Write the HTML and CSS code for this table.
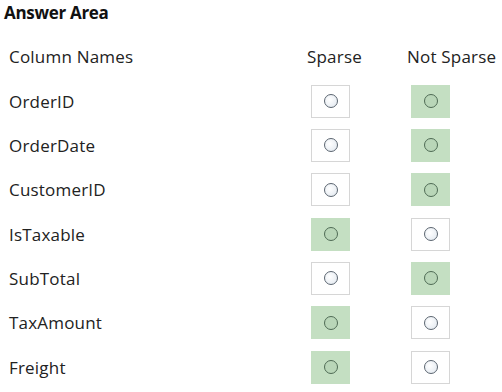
FILE: index.html
```html
<!DOCTYPE html>
<html>
<head>
<meta charset="utf-8">
<link rel="stylesheet" href="styles.css">
</head>
<body>
<div class="page">
  <h1 class="title">Answer Area</h1>
  <div class="grid">
    <div class="cell head name">Column Names</div>
    <div class="cell head">Sparse</div>
    <div class="cell head">Not Sparse</div>

    <div class="cell name">OrderID</div>
    <div class="cell"><span class="box"><span class="radio"></span></span></div>
    <div class="cell"><span class="box on"><span class="radio"></span></span></div>

    <div class="cell name">OrderDate</div>
    <div class="cell"><span class="box"><span class="radio"></span></span></div>
    <div class="cell"><span class="box on"><span class="radio"></span></span></div>

    <div class="cell name">CustomerID</div>
    <div class="cell"><span class="box"><span class="radio"></span></span></div>
    <div class="cell"><span class="box on"><span class="radio"></span></span></div>

    <div class="cell name">IsTaxable</div>
    <div class="cell"><span class="box on"><span class="radio"></span></span></div>
    <div class="cell"><span class="box"><span class="radio"></span></span></div>

    <div class="cell name">SubTotal</div>
    <div class="cell"><span class="box"><span class="radio"></span></span></div>
    <div class="cell"><span class="box on"><span class="radio"></span></span></div>

    <div class="cell name">TaxAmount</div>
    <div class="cell"><span class="box on"><span class="radio"></span></span></div>
    <div class="cell"><span class="box"><span class="radio"></span></span></div>

    <div class="cell name">Freight</div>
    <div class="cell"><span class="box on"><span class="radio"></span></span></div>
    <div class="cell"><span class="box"><span class="radio"></span></span></div>
  </div>
</div>
</body>
</html>
```
FILE: styles.css
```css
html, body {
  margin: 0;
  padding: 0;
  background: #fff;
}
.page {
  width: 502px;
  height: 392px;
  font-family: "Open Sans", "Noto Sans", sans-serif;
  color: #222;
}
.title {
  margin: 0;
  padding: 2px 0 0 4px;
  height: 34px;
  box-sizing: border-box;
  font-size: 17px;
  font-weight: 700;
  line-height: 22px;
  letter-spacing: -0.3px;
  color: #111;
}
.grid {
  display: grid;
  grid-template-columns: 298px 100px 95px;
  grid-template-rows: 45px repeat(7, 44.33px);
  padding-left: 9px;
}
.cell {
  display: flex;
  align-items: center;
  font-size: 17px;
  letter-spacing: 0.2px;
}
.head {
  color: #222;
}
.box {
  display: flex;
  align-items: center;
  justify-content: center;
  width: 39px;
  height: 33px;
  margin-left: 4px;
  box-sizing: border-box;
  border: 1px solid #d6d6d6;
  background: #fff;
}
.box.on {
  background: #c4dfc2;
  border-color: #c4dfc2;
}
.radio {
  width: 14px;
  height: 14px;
  border-radius: 50%;
  box-sizing: border-box;
  border: 1.5px solid #5b6570;
  background: radial-gradient(circle at 40% 40%, #ffffff, #dfe6ee);
}
.box.on .radio {
  border-color: #4f6b55;
  background: #b9d6b8;
}
```
